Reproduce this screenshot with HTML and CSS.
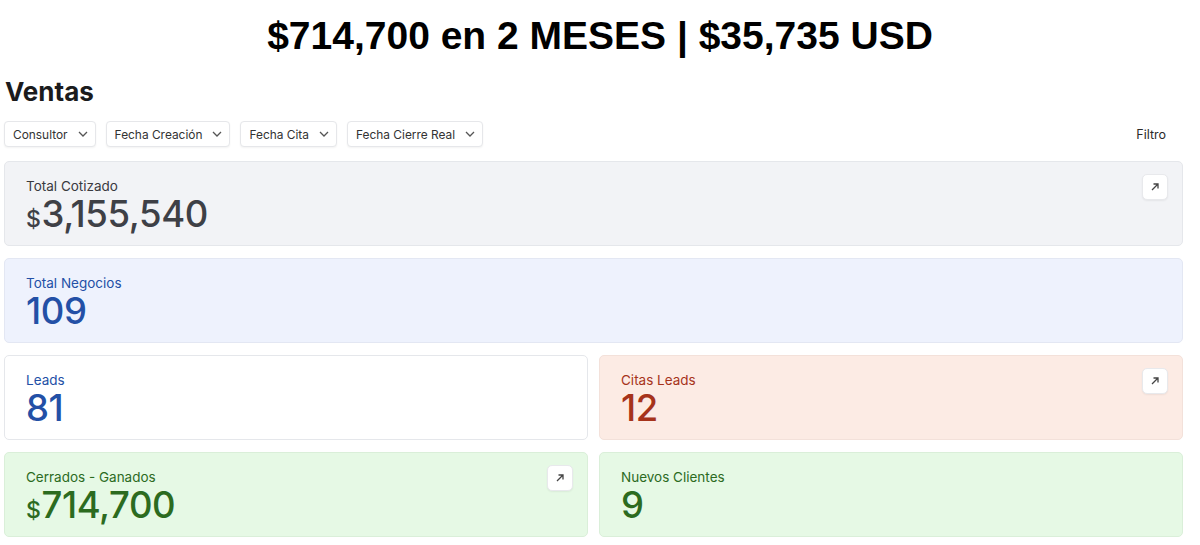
FILE: index.html
```html
<!DOCTYPE html>
<html lang="es">
<head>
    <meta charset="UTF-8">
    <meta name="viewport" content="width=device-width, initial-scale=1.0">
    <title>Ventas</title>
    <link rel="stylesheet" href="styles.css">
</head>
<body>
    <h1 class="headline">$714,700 en 2 MESES | $35,735 USD</h1>

    <h2 class="page-title">Ventas</h2>
    <div class="filter-bar">
        <div class="filters">
            <button class="filter">Consultor <span class="chev"><svg width="10" height="6" viewBox="0 0 10 6"><path d="M1 1l4 4 4-4" fill="none" stroke="#555" stroke-width="1.3"/></svg></span></button>
            <button class="filter">Fecha Creación <span class="chev"><svg width="10" height="6" viewBox="0 0 10 6"><path d="M1 1l4 4 4-4" fill="none" stroke="#555" stroke-width="1.3"/></svg></span></button>
            <button class="filter">Fecha Cita <span class="chev"><svg width="10" height="6" viewBox="0 0 10 6"><path d="M1 1l4 4 4-4" fill="none" stroke="#555" stroke-width="1.3"/></svg></span></button>
            <button class="filter">Fecha Cierre Real <span class="chev"><svg width="10" height="6" viewBox="0 0 10 6"><path d="M1 1l4 4 4-4" fill="none" stroke="#555" stroke-width="1.3"/></svg></span></button>
        </div>
        <span class="filter-label">Filtro</span>
    </div>

    <div class="cards">
        <div class="card card-gray wide">
            <div class="label">Total Cotizado</div>
            <div class="value"><span class="cur">$</span>3,155,540</div>
            <button class="open"><svg width="10" height="10" viewBox="0 0 10 10"><path d="M2 8L8 2M3.5 2H8v4.5" fill="none" stroke="#444" stroke-width="1.3"/></svg></button>
        </div>
        <div class="card card-blue wide">
            <div class="label">Total Negocios</div>
            <div class="value">109</div>
        </div>
        <div class="card card-white">
            <div class="label">Leads</div>
            <div class="value">81</div>
        </div>
        <div class="card card-red">
            <div class="label">Citas Leads</div>
            <div class="value">12</div>
            <button class="open"><svg width="10" height="10" viewBox="0 0 10 10"><path d="M2 8L8 2M3.5 2H8v4.5" fill="none" stroke="#444" stroke-width="1.3"/></svg></button>
        </div>
        <div class="card card-green">
            <div class="label">Cerrados - Ganados</div>
            <div class="value"><span class="cur">$</span>714,700</div>
            <button class="open"><svg width="10" height="10" viewBox="0 0 10 10"><path d="M2 8L8 2M3.5 2H8v4.5" fill="none" stroke="#444" stroke-width="1.3"/></svg></button>
        </div>
        <div class="card card-green">
            <div class="label">Nuevos Clientes</div>
            <div class="value">9</div>
        </div>
    </div>
</body>
</html>
```

FILE: styles.css
```css
body {
    margin: 0;
    padding: 0 17px 0 4px;
    font-family: "Inter", "Liberation Sans", sans-serif;
    background: #fff;
    color: #1d1d1f;
}
.headline {
    margin: 0;
    padding-top: 13px;
    height: 58px;
    box-sizing: border-box;
    text-align: center;
    font-family: "Liberation Sans", Arial, sans-serif;
    font-size: 39px;
    font-weight: bold;
    line-height: 45px;
    color: #000;
    padding-left: 13px;
}
.page-title {
    margin: 0;
    padding-top: 18px;
    font-size: 26px;
    font-weight: 700;
    line-height: 32px;
    padding-left: 1px;
    color: #1b1b1d;
}
.filter-bar {
    display: flex;
    align-items: center;
    justify-content: space-between;
    margin-top: 13px;
}
.filters {
    display: flex;
    gap: 10px;
}
.filter {
    display: flex;
    align-items: center;
    gap: 10px;
    height: 26px;
    padding: 0 7px 0 8px;
    background: #fff;
    border: 1px solid #e6e7ea;
    border-radius: 4px;
    box-shadow: 0 1px 2px rgba(0, 0, 0, 0.05);
    font-family: inherit;
    font-size: 11.9px;
    color: #333;
}
.chev {
    display: flex;
}
.filter-label {
    font-size: 12.5px;
    color: #2a2a2a;
    margin-right: 17px;
}
.cards {
    display: grid;
    grid-template-columns: 1fr 1fr;
    gap: 12px 11px;
    margin-top: 14px;
}
.card {
    position: relative;
    height: 85px;
    box-sizing: border-box;
    padding: 16px 21px;
    border-radius: 5px;
    border: 1px solid #e5e7eb;
}
.wide {
    grid-column: span 2;
}
.label {
    font-size: 13.5px;
    line-height: 17px;
}
.value {
    font-size: 36.5px;
    line-height: 39px;
    font-weight: 500;
    letter-spacing: -0.4px;
}
.cur {
    font-size: 23px;
    margin-right: 1px;
}
.open {
    position: absolute;
    top: 12px;
    right: 14px;
    width: 26px;
    height: 26px;
    display: flex;
    align-items: center;
    justify-content: center;
    padding: 0;
    background: #fff;
    border: 1px solid #e8e9ec;
    border-radius: 5px;
    box-shadow: 0 1px 2px rgba(0, 0, 0, 0.06);
}
.card-gray {
    background: #f2f3f6;
    color: #3e4046;
}
.card-gray .label {
    color: #3a3a3e;
}
.card-blue {
    background: #eef2fd;
    border-color: #e3e7f3;
    color: #2350a6;
}
.card-white {
    background: #fff;
    color: #2350a6;
}
.card-red {
    background: #fcebe4;
    border-color: #f3e1da;
    color: #a6331b;
}
.card-green {
    background: #e6f9e5;
    border-color: #daefd9;
    color: #2c6b1f;
}
```
